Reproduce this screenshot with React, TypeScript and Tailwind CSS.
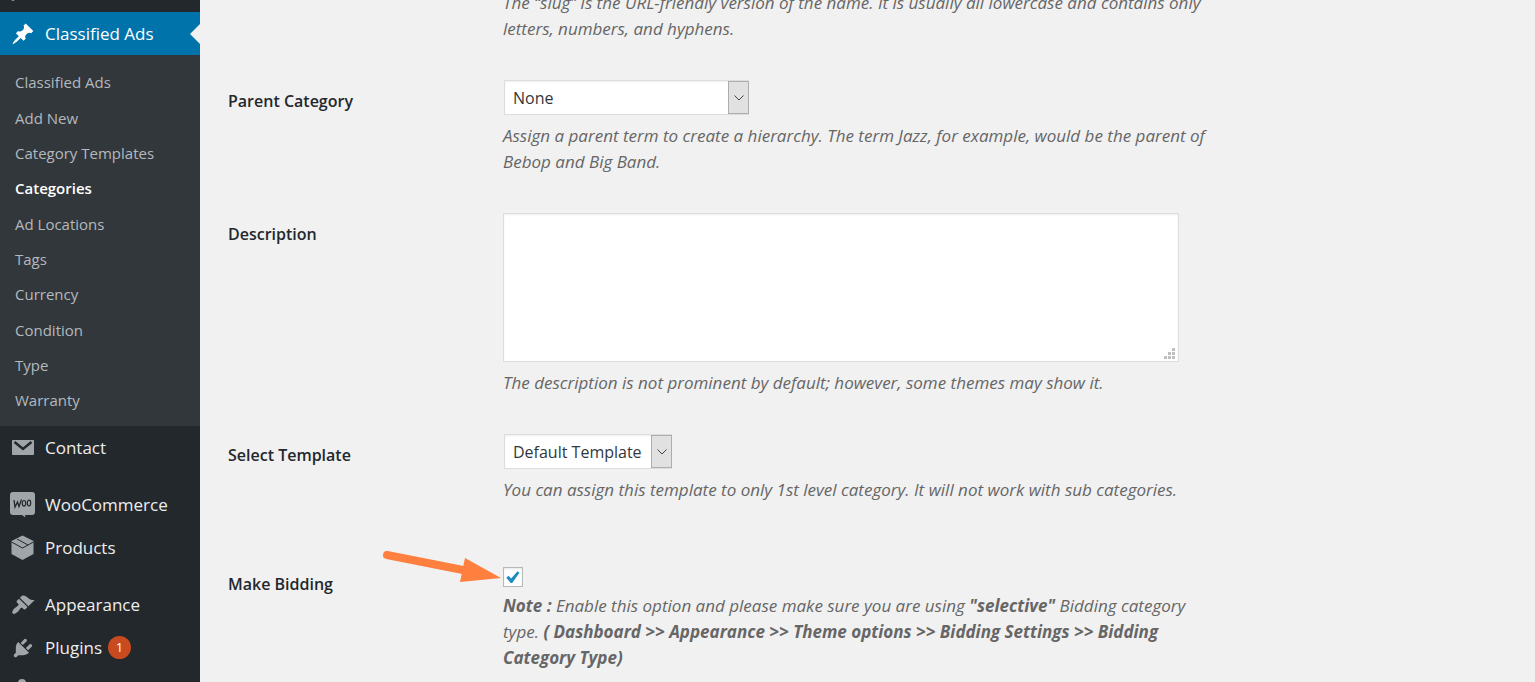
import { useState } from 'react'
import type { ReactNode } from 'react'

const submenu = [
  'Classified Ads',
  'Add New',
  'Category Templates',
  'Categories',
  'Ad Locations',
  'Tags',
  'Currency',
  'Condition',
  'Type',
  'Warranty',
]

function PinIcon() {
  return (
    <svg viewBox="0 0 20 20" className="size-6 shrink-0 fill-white" aria-hidden="true">
      <path d="M10.44 3.02l1.82-1.82 6.36 6.35-1.83 1.82c-1.05-.68-2.48-.57-3.41.36l-.75.75c-.92.93-1.04 2.35-.35 3.41l-1.83 1.82-2.41-2.41-2.8 2.79c-.42.42-3.38 2.71-3.8 2.29s1.86-3.39 2.28-3.81l2.79-2.79L4.1 9.36l1.83-1.82c1.05.69 2.48.57 3.4-.36l.75-.75c.93-.92 1.05-2.35.36-3.41z" />
    </svg>
  )
}

function MailIcon() {
  return (
    <svg viewBox="0 0 24 24" className="size-6 shrink-0" aria-hidden="true">
      <rect x="1" y="4" width="22" height="15" rx="1" className="fill-[#a0a5aa]" />
      <path d="M3.5 6l8.5 7 8.5-7" className="fill-none stroke-[#23282d] stroke-[2.5]" />
    </svg>
  )
}

function WooIcon() {
  return (
    <svg viewBox="0 0 26 26" className="-mx-px size-[26px] shrink-0" aria-hidden="true">
      <path
        d="M3 0h19a3 3 0 0 1 3 3v17a3 3 0 0 1-3 3h-7l.5 2.5L12 23H3a3 3 0 0 1-3-3V3a3 3 0 0 1 3-3z"
        className="fill-[#a0a5aa]"
      />
      <path d="M4 8l1 7 2.500-5 1.500 4.500 2.500-7" className="fill-none stroke-[#23282d] stroke-[1.3]" />
      <ellipse cx="14" cy="11.3" rx="1.7" ry="2.8" className="fill-none stroke-[#23282d] stroke-[1.2]" />
      <ellipse cx="19" cy="11" rx="1.7" ry="2.8" className="fill-none stroke-[#23282d] stroke-[1.2]" />
    </svg>
  )
}

function BoxIcon() {
  return (
    <svg viewBox="0 0 24 26" className="h-[26px] w-6 shrink-0" aria-hidden="true">
      <path d="M11.5 .5l11 5.5v13l-11 6-11-6V6z" className="fill-[#a0a5aa]" />
      <path d="M.5 7l11 6 11-6M6 4l11 6" className="fill-none stroke-[#23282d]" />
    </svg>
  )
}

function BrushIcon() {
  return (
    <svg viewBox="0 0 20 20" className="size-6 shrink-0 fill-[#a0a5aa]" aria-hidden="true">
      <path d="M14.48 11.06L7.41 3.99l1.5-1.5c.5-.56 2.3-.47 3.51.32 1.21.8 1.43 1.28 2.91 2.1 1.18.64 2.45 1.26 4.45.85zm-.71.71L6.7 4.7 4.93 6.47c-.39.39-.39 1.02 0 1.41l1.06 1.06c.39.39.39 1.03 0 1.42-.6.6-1.43 1.11-2.21 1.69-.35.26-.7.53-1.01.84C1.43 14.23.4 16.08 1.4 17.07c.99 1 2.84-.03 4.18-1.36.31-.31.58-.66.85-1.02.57-.78 1.08-1.61 1.69-2.21.39-.39 1.02-.39 1.41 0l1.06 1.06c.39.39 1.02.39 1.41 0z" />
    </svg>
  )
}

function PlugIcon() {
  return (
    <svg viewBox="0 0 20 20" className="size-6 shrink-0 fill-[#a0a5aa]" aria-hidden="true">
      <path d="M13.11 4.36L9.87 7.6 8 5.73l3.24-3.24c.35-.34 1.05-.2 1.56.32.52.51.66 1.21.31 1.55zm-8 1.77l.91-1.12 9.01 9.01-1.19.84c-.71.71-2.63 1.16-3.82 1.16H6.14L4.9 17.26c-.59.59-1.54.59-2.12 0-.59-.58-.59-1.53 0-2.12l1.24-1.24v-3.88c0-1.13.4-3.19 1.09-3.89zm7.26 3.97l3.24-3.24c.34-.35 1.04-.21 1.55.31.52.51.66 1.21.31 1.55l-3.24 3.25z" />
    </svg>
  )
}

function UserIcon() {
  return (
    <svg viewBox="0 0 24 24" className="size-6 shrink-0 fill-[#a0a5aa]" aria-hidden="true">
      <circle cx="11" cy="4" r="4" />
      <path d="M3 22c0-8 3-12 8-12s8 4 8 12z" />
    </svg>
  )
}

function MenuLink({ icon, label, children }: { icon: ReactNode; label?: string; children?: ReactNode }) {
  return (
    <a href="#" aria-label={label} className="flex h-[43px] items-center gap-[10px] px-[11px] text-[17px] text-[#eee]">
      {icon}
      {children}
    </a>
  )
}

function Sidebar() {
  return (
    <nav className="w-[200px] shrink-0 bg-[#23282d]">
      <div className="h-3 px-[11px]">
        <svg viewBox="0 0 4 2" className="h-[2px] w-1 fill-[#a0a5aa]" aria-hidden="true">
          <path d="M0 0h4L2 1z" />
        </svg>
      </div>
      <a href="#" className="relative flex h-[43px] items-center gap-[10px] bg-[#0073aa] px-[11px] text-[17px] text-white">
        <PinIcon />
        Classified Ads
        <span className="absolute top-1/2 right-0 -translate-y-1/2 border-y-10 border-r-10 border-y-transparent border-r-[#f1f1f1]" />
      </a>
      <ul className="flex h-[371px] flex-col justify-between bg-[#32373c] pt-[10px] pb-2">
        {submenu.map((item) => (
          <li key={item}>
            <a
              href="#"
              className={
                item === 'Categories'
                  ? 'flex h-[35px] items-center px-[15px] text-[15px] font-semibold text-white'
                  : 'flex h-[35px] items-center px-[15px] text-[15px] text-[#b4b9be]'
              }
            >
              {item}
            </a>
          </li>
        ))}
      </ul>
      <MenuLink icon={<MailIcon />}>Contact</MenuLink>
      <div className="h-[14px]" />
      <MenuLink icon={<WooIcon />}>WooCommerce</MenuLink>
      <MenuLink icon={<BoxIcon />}>Products</MenuLink>
      <div className="h-[14px]" />
      <MenuLink icon={<BrushIcon />}>Appearance</MenuLink>
      <MenuLink icon={<PlugIcon />}>
        <span className="flex items-center gap-[6px]">
          Plugins
          <span className="flex size-[23px] items-center justify-center rounded-full bg-[#ca4a1f] text-[13px] text-white">
            1
          </span>
        </span>
      </MenuLink>
      <MenuLink icon={<UserIcon />} label="Users" />
    </nav>
  )
}

function Row({ id, label, children }: { id: string; label: string; children: ReactNode }) {
  return (
    <div className="flex">
      <label htmlFor={id} className="w-[275px] shrink-0 pt-2 text-base leading-[26px] font-semibold text-[#23282d]">
        {label}
      </label>
      <div className="min-w-0 flex-1">{children}</div>
    </div>
  )
}

function Hint({ children }: { children: ReactNode }) {
  return <p className="max-w-[716px] pt-2 text-[17px] leading-[26px] text-[#666] italic">{children}</p>
}

function Select({ id, option, width }: { id: string; option: string; width: string }) {
  return (
    <div className={`relative ml-px ${width}`}>
      <select
        id={id}
        className="block h-[35px] w-full appearance-none border border-[#ddd] bg-white pr-[22px] pl-2 text-base text-[#32373c] shadow-[inset_0_1px_2px_rgba(0,0,0,0.07)]"
      >
        <option>{option}</option>
      </select>
      <span className="pointer-events-none absolute inset-y-px right-0 flex w-[21px] items-center justify-center border border-[#adadad] bg-[#e1e1e1]">
        <svg viewBox="0 0 10 6" className="h-[6px] w-[10px] fill-none stroke-[#444]" aria-hidden="true">
          <path d="M.5 .5L5 5 9.5 .5" />
        </svg>
      </span>
    </div>
  )
}

function ResizeGrip() {
  return (
    <svg viewBox="0 0 11 11" className="pointer-events-none absolute right-1 bottom-[3px] size-[11px] fill-[#bfbfbf]" aria-hidden="true">
      <path d="M8 0h3v3H8zM4 4h3v3H4zM8 4h3v3H8zM0 8h3v3H0zM4 8h3v3H4zM8 8h3v3H8z" />
    </svg>
  )
}

function Arrow() {
  return (
    <svg
      viewBox="0 0 122 36"
      className="pointer-events-none absolute -top-[15px] right-full h-9 w-[122px] fill-[#ff7f3f]"
      aria-hidden="true"
    >
      <path d="M6 7l76 15" className="stroke-[#ff7f3f] stroke-8" strokeLinecap="round" />
      <path d="M84 10l36 20-41 4z" />
    </svg>
  )
}

export default function App() {
  const [bidding, setBidding] = useState(true)

  return (
    <div className="flex h-screen overflow-hidden bg-[#f1f1f1] font-['Open_Sans',sans-serif]">
      <Sidebar />
      <main className="-mt-[18px] flex min-w-0 flex-1 flex-col gap-[38px] px-7">
        <div className="pl-[275px]">
          <Hint>
            The “slug” is the URL-friendly version of the name. It is usually all lowercase and contains only letters,
            numbers, and hyphens.
          </Hint>
        </div>

        <Row id="parent" label="Parent Category">
          <Select id="parent" option="None" width="w-[245px]" />
          <Hint>
            Assign a parent term to create a hierarchy. The term Jazz, for example, would be the parent of Bebop and Big
            Band.
          </Hint>
        </Row>

        <Row id="description" label="Description">
          <div className="relative max-w-[676px]">
            <textarea
              id="description"
              className="block h-[149px] w-full resize-none border border-[#ddd] bg-white p-2 text-[17px] shadow-[inset_0_1px_2px_rgba(0,0,0,0.07)]"
            />
            <ResizeGrip />
          </div>
          <Hint>The description is not prominent by default; however, some themes may show it.</Hint>
        </Row>

        <Row id="template" label="Select Template">
          <Select id="template" option="Default Template" width="w-[168px]" />
          <Hint>You can assign this template to only 1st level category. It will not work with sub categories.</Hint>
        </Row>

        <div className="pt-[22px]">
          <Row id="bidding" label="Make Bidding">
            <div className="relative h-[22px] pt-1">
              <Arrow />
              <div className="relative size-5">
                <input
                  id="bidding"
                  type="checkbox"
                  checked={bidding}
                  onChange={(e) => setBidding(e.target.checked)}
                  className="block size-5 appearance-none border border-[#b4b9be] bg-white shadow-[inset_0_1px_2px_rgba(0,0,0,0.1)]"
                />
                {bidding && (
                  <svg viewBox="0 0 20 20" className="pointer-events-none absolute inset-0 size-5 fill-[#1e8cbe]" aria-hidden="true">
                    <path d="M14.5 4.3l2 1.5L9.2 16H7.8l-4.5-5.3 2.2-1.9 2.7 2.6z" />
                  </svg>
                )}
              </div>
            </div>
            <Hint>
              <strong className="font-bold">Note :</strong> Enable this option and please make sure you are using{' '}
              <strong className="font-bold">"selective"</strong> Bidding category type.{' '}
              <strong className="font-bold">
                ( Dashboard &gt;&gt; Appearance &gt;&gt; Theme options &gt;&gt; Bidding Settings &gt;&gt; Bidding Category
                Type)
              </strong>
            </Hint>
          </Row>
        </div>
      </main>
    </div>
  )
}
